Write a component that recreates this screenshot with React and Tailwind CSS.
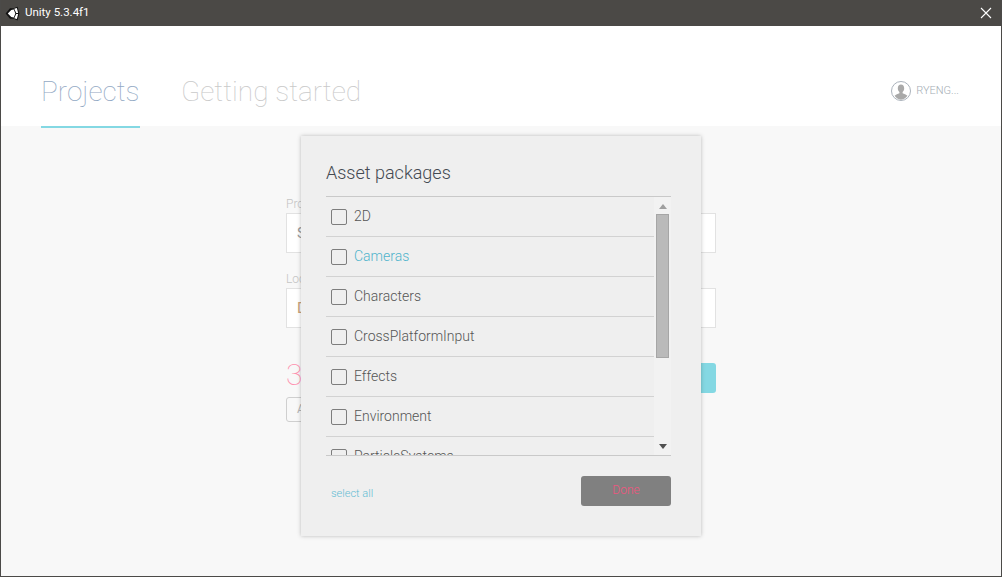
import React from "react";

const font = { fontFamily: "Roboto, sans-serif" };

const packages = [
  { name: "2D" },
  { name: "Cameras", active: true },
  { name: "Characters" },
  { name: "CrossPlatformInput" },
  { name: "Effects" },
  { name: "Environment" },
  { name: "ParticleSystems" },
];

// unity cube mark on the dark title bar
const UnityLogo = () => (
  <svg width="15" height="15" viewBox="0 0 24 24" fill="#fff">
    <path d="M1 12 8 3.500h6L20 1l3 11-3 11-6-2.500H8z" fill="#111" />
    <path d="M14.800 4.200 19 3.100l2 8-3 .1zM4.500 12 10 6.500l4-.9 2.500 6.400zM4.500 12h12L14 18.400l-4-.9zM18 12.800l3-.1-2 8-4.200-1.100z" />
  </svg>
);

const Field = ({ label, value, valueClass, className }) => (
  <div className={className}>
    <div className="text-[12px] leading-[14px] text-[#c4c4c4] font-light">{label}</div>
    <div className="mt-[2px] h-10 border border-[#e2e2e2] bg-white flex items-center pl-[10px] text-[15px] text-[#9a9a9a]">
      <span className={valueClass}>{value}</span>
    </div>
  </div>
);

const Row = ({ name, active }) => (
  <div className="h-10 shrink-0 flex items-center pl-[5px] border-b border-[#d2d2d2]">
    <span className="w-4 h-4 rounded-[2px] border border-[#7d7d7d]" />
    <span className={`ml-[7px] text-[14px] font-light ${active ? "text-[#4fb4cc]" : "text-[#555]"}`}>{name}</span>
  </div>
);

export default function App() {
  return (
    <div className="relative w-[1002px] h-[577px] overflow-hidden flex flex-col bg-[#f8f8f8] border-x border-b border-[#4b4a48]" style={font}>
      {/* title bar */}
      <div className="h-[26px] shrink-0 -mx-px bg-[#4b4946] flex items-center pl-[5px] pr-[10px] text-white text-[11.5px]">
        <UnityLogo />
        <span className="ml-[5px]">Unity 5.3.4f1</span>
        <svg className="ml-auto" width="12" height="12" viewBox="0 0 12 12" stroke="#fff" strokeWidth="1.1">
          <path d="M1 1l10 10M11 1L1 11" />
        </svg>
      </div>

      {/* header tabs */}
      <div className="h-[100px] shrink-0 bg-white flex items-end pl-10 pr-[42px]">
        <div className="h-[68px] w-[99px] -mb-[2px] border-b-2 border-[#84d8e3] text-[#93a9c4] text-[28px] leading-[64px] font-thin">
          Projects
        </div>
        <div className="h-[68px] -mb-[2px] ml-[41px] text-[#c9c9c9] text-[28px] leading-[64px] font-thin">Getting started</div>
        <div className="ml-auto h-[66px] flex items-start pt-[21px]">
          <svg width="20" height="20" viewBox="0 0 20 20">
            <circle cx="10" cy="10" r="9.500" fill="#fff" stroke="#aab2bb" />
            <path d="M10 3.500c2 0 3.200 1.500 3.200 3.700 0 1.600-.7 3-1.600 3.800v1.200c1.500.7 3.600 1.200 4.800 2.600A8.800 8.800 0 0 1 10 18.800a8.800 8.800 0 0 1-6.400-4c1.200-1.400 3.300-1.900 4.800-2.600V11c-.9-.8-1.600-2.200-1.600-3.800C6.800 5 8 3.500 10 3.500z" fill="#a9a9a9" />
          </svg>
          <span className="ml-[5px] text-[11px] leading-[20px] text-[#a5adb5] font-light">RYENG...</span>
        </div>
      </div>

      {/* project form behind the dialog */}
      <div className="w-[430px] ml-[285px] pt-[71px]">
        <Field label="Project name" value="S" />
        <Field className="mt-[19px]" label="Location" value="D" valueClass="text-[#c9a27a]" />
        <div className="mt-[35px] flex justify-between items-start">
          <span className="text-[30px] leading-[32px] text-[#ff8fae] font-thin -mt-[4px]">3</span>
          <div className="w-[60px] h-[30px] rounded-[3px] bg-[#84d8e3]" />
        </div>
        <div className="mt-[4px] w-[100px] h-[25px] rounded-[3px] border border-[#cfcfcf] text-[12px] leading-[23px] pl-[10px] text-[#b5b5b5]">
          Add
        </div>
      </div>

      {/* asset packages dialog */}
      <div className="absolute left-[300px] top-[136px] w-[400px] h-[400px] bg-[#efefef] shadow-[0_0_4px_rgba(0,0,0,0.25)] flex flex-col pl-[25px] pr-[30px]">
        <h2 className="h-[60px] shrink-0 pt-[25px] text-[18px] leading-[24px] font-light text-[#444a52]">Asset packages</h2>
        <div className="h-[260px] shrink-0 border-y border-[#c9c9c9] flex overflow-hidden">
          <div className="flex-1 flex flex-col overflow-hidden">
            {packages.map((p) => (
              <Row key={p.name} name={p.name} active={p.active} />
            ))}
          </div>
          <div className="w-[17px] shrink-0 bg-[#f2f2f2] flex flex-col items-center">
            <svg className="mt-[7px] shrink-0" width="8" height="5" viewBox="0 0 8 5" fill="#9f9f9f">
              <path d="M4 0l4 5H0z" />
            </svg>
            <div className="mt-[5px] w-[13px] h-[144px] shrink-0 bg-[#bababa] border border-[#a6a6a6]" />
            <svg className="mt-auto mb-[6px] shrink-0" width="8" height="5" viewBox="0 0 8 5" fill="#505050">
              <path d="M0 0h8L4 5z" />
            </svg>
          </div>
        </div>
        <div className="mt-5 flex items-center justify-between pl-[5px]">
          <span className="mt-[6px] text-[11px] font-light text-[#5fbcd3]">select all</span>
          <div className="w-[90px] h-[30px] rounded-[3px] bg-[#808080] text-[#f0557f] text-[12px] leading-[29px] text-center font-light">
            Done
          </div>
        </div>
      </div>
    </div>
  );
}
